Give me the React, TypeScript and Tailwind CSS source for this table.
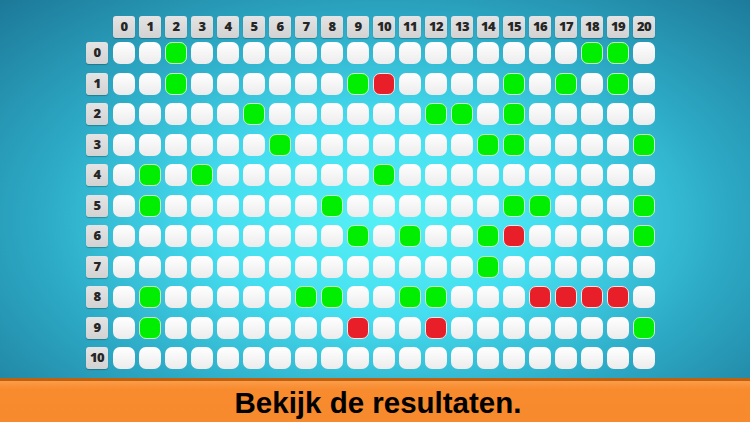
const greens: Record<number, number[]> = {
  0: [2, 18, 19],
  1: [2, 9, 15, 17, 19],
  2: [5, 12, 13, 15],
  3: [6, 14, 15, 20],
  4: [1, 3, 10],
  5: [1, 8, 15, 16, 20],
  6: [9, 11, 14, 20],
  7: [14],
  8: [1, 7, 8, 11, 12],
  9: [1, 20],
  10: [],
};

const reds: Record<number, number[]> = {
  1: [10],
  6: [15],
  8: [16, 17, 18, 19],
  9: [9, 12],
};

const cols = Array.from({ length: 21 }, (_, i) => i);
const rows = Array.from({ length: 11 }, (_, i) => i);

function Label({ text }: { text: number }) {
  return (
    <div className="flex h-[22px] w-[22px] items-center justify-center rounded-[3px] bg-gradient-to-b from-[#e4e4e4] to-[#d2d2d2] text-[13px] font-extrabold tracking-[-0.5px] text-[#262626] shadow-[0_1px_1px_rgba(0,0,0,0.25)]">
      {text}
    </div>
  );
}

function Cell({ state }: { state: "empty" | "green" | "red" }) {
  if (state === "green") {
    return (
      <div className="h-[22px] w-[22px] rounded-[7px] border-[1.5px] border-[#c9f7c3] bg-[#00ef00]" />
    );
  }
  if (state === "red") {
    return (
      <div className="h-[22px] w-[22px] rounded-[7px] border-[1.5px] border-[#f4e4e4] bg-[#e81e28]" />
    );
  }
  return (
    <div className="h-[22px] w-[22px] rounded-[7px] bg-gradient-to-b from-[#ffffff] to-[#ececec]" />
  );
}

export default function App() {
  return (
    <div
      className="flex h-[422px] w-[750px] flex-col overflow-hidden"
      style={{ fontFamily: '"Open Sans", "Liberation Sans", sans-serif' }}
    >
      <div className="flex h-[378px] flex-col gap-[8.5px] bg-[radial-gradient(ellipse_75%_85%_at_51%_58%,#55f0f6_0%,#45def0_30%,#2ca8c4_62%,#1b7393_100%)] pl-[86px] pt-[16px]">
        <div className="-mb-[4.5px] flex">
          <div className="mr-[5px] w-[22px]" />
          <div className="flex gap-[4px]">
            {cols.map((c) => (
              <Label key={c} text={c} />
            ))}
          </div>
        </div>
        {rows.map((r) => (
          <div key={r} className="flex">
            <div className="mr-[5px]">
              <Label text={r} />
            </div>
            <div className="flex gap-[4px]">
              {cols.map((c) => (
                <Cell
                  key={c}
                  state={
                    (greens[r] || []).includes(c)
                      ? "green"
                      : (reds[r] || []).includes(c)
                        ? "red"
                        : "empty"
                  }
                />
              ))}
            </div>
          </div>
        ))}
      </div>
      <div className="flex flex-1 flex-col">
        <div className="h-[3px] bg-[#bf610f]" />
        <div className="flex flex-1 items-center justify-center bg-gradient-to-b from-[#fb9c48] via-[#f78b2e] via-20% to-[#f68a2c] pl-[6px] pt-[2px]">
          <span
            className="text-[29.5px] font-bold leading-none text-black"
            style={{ fontFamily: '"Liberation Sans", Arial, sans-serif' }}
          >
            Bekijk de resultaten.
          </span>
        </div>
      </div>
    </div>
  );
}
